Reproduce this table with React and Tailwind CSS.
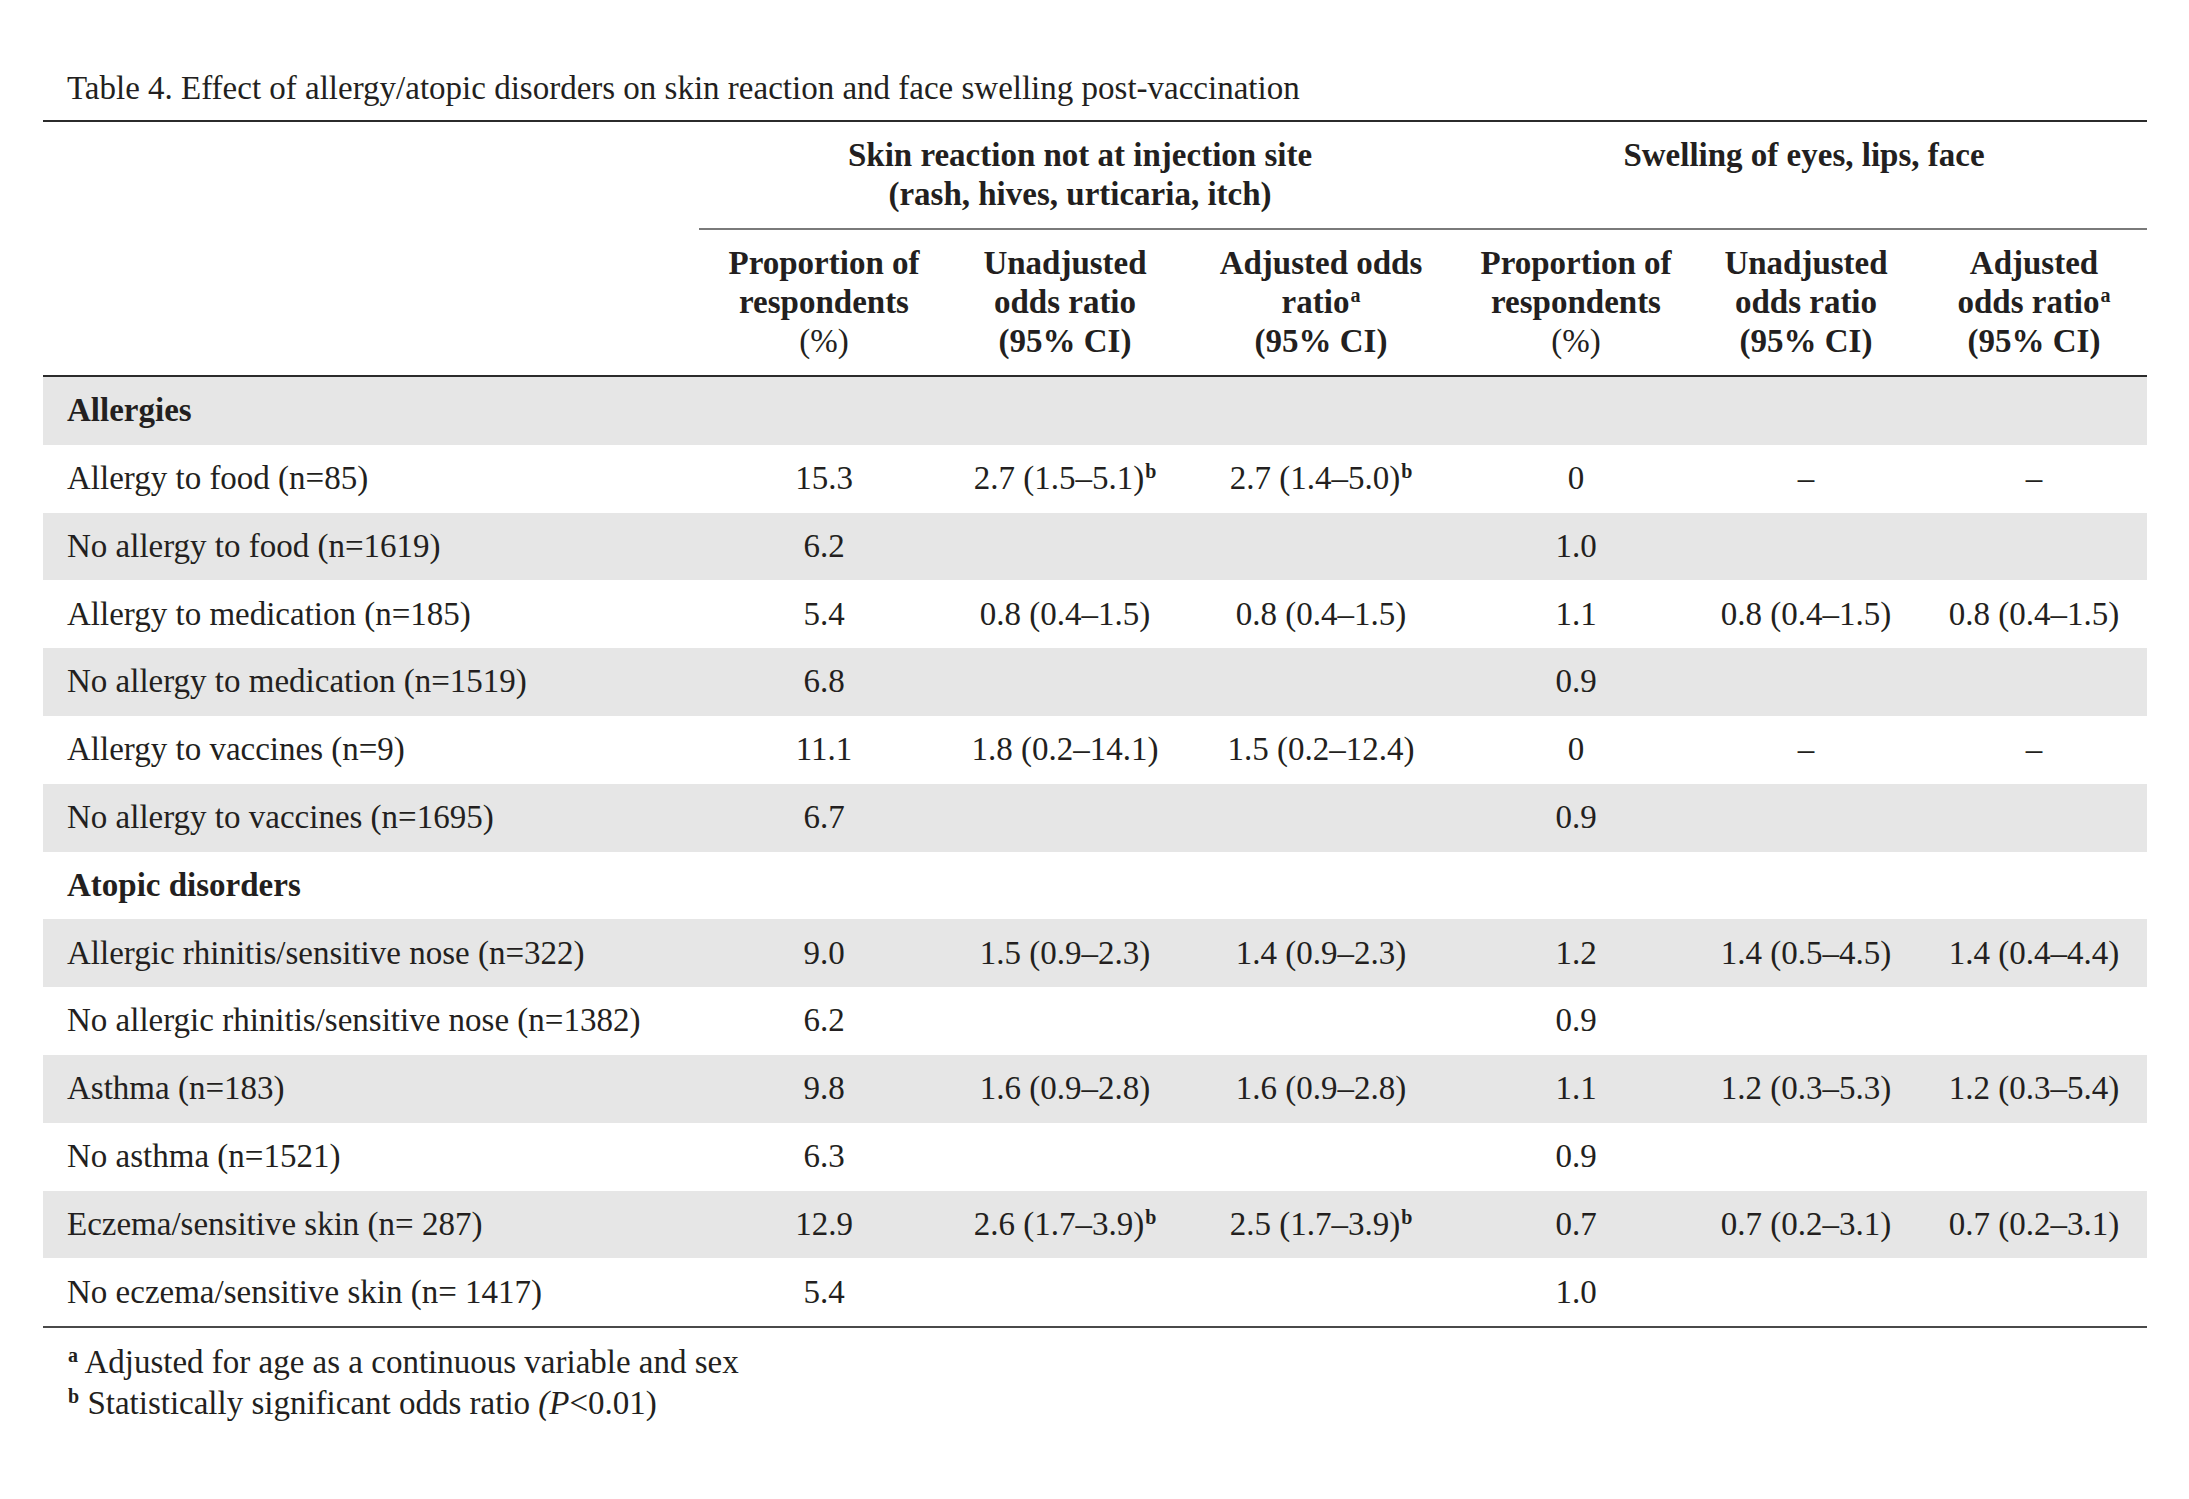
import React from "react";

const cols = "grid grid-cols-[656px_250px_232px_280px_230px_230px_226px]";

const rows = [
  { label: "Allergies", bold: true, gray: true },
  { label: "Allergy to food (n=85)", v: ["15.3", ["2.7 (1.5–5.1)", "b"], ["2.7 (1.4–5.0)", "b"], "0", "–", "–"] },
  { label: "No allergy to food (n=1619)", gray: true, v: ["6.2", "", "", "1.0", "", ""] },
  { label: "Allergy to medication (n=185)", v: ["5.4", "0.8 (0.4–1.5)", "0.8 (0.4–1.5)", "1.1", "0.8 (0.4–1.5)", "0.8 (0.4–1.5)"] },
  { label: "No allergy to medication (n=1519)", gray: true, v: ["6.8", "", "", "0.9", "", ""] },
  { label: "Allergy to vaccines (n=9)", v: ["11.1", "1.8 (0.2–14.1)", "1.5 (0.2–12.4)", "0", "–", "–"] },
  { label: "No allergy to vaccines (n=1695)", gray: true, v: ["6.7", "", "", "0.9", "", ""] },
  { label: "Atopic disorders", bold: true },
  { label: "Allergic rhinitis/sensitive nose (n=322)", gray: true, v: ["9.0", "1.5 (0.9–2.3)", "1.4 (0.9–2.3)", "1.2", "1.4 (0.5–4.5)", "1.4 (0.4–4.4)"] },
  { label: "No allergic rhinitis/sensitive nose (n=1382)", v: ["6.2", "", "", "0.9", "", ""] },
  { label: "Asthma (n=183)", gray: true, v: ["9.8", "1.6 (0.9–2.8)", "1.6 (0.9–2.8)", "1.1", "1.2 (0.3–5.3)", "1.2 (0.3–5.4)"] },
  { label: "No asthma (n=1521)", v: ["6.3", "", "", "0.9", "", ""] },
  { label: "Eczema/sensitive skin (n= 287)", gray: true, v: ["12.9", ["2.6 (1.7–3.9)", "b"], ["2.5 (1.7–3.9)", "b"], "0.7", "0.7 (0.2–3.1)", "0.7 (0.2–3.1)"] },
  { label: "No eczema/sensitive skin (n= 1417)", v: ["5.4", "", "", "1.0", "", ""] },
];

function Sup({ children }) {
  return (
    <span className="relative -top-[11px] text-[20px] font-bold leading-none ml-[1px]">{children}</span>
  );
}

function Cell({ value }) {
  if (Array.isArray(value)) {
    return (
      <div className="text-center">
        {value[0]}
        <Sup>{value[1]}</Sup>
      </div>
    );
  }
  return <div className="text-center">{value}</div>;
}

export default function App() {
  return (
    <div className="min-h-[1499px] w-[2189px] bg-white text-[#231f20] font-['Liberation_Serif','Times_New_Roman',serif] text-[33px]">
      <div className="ml-[43px] w-[2104px] pt-[68px]">
        <div className="pl-[24px] leading-[40px] mb-[12px]">
          Table 4. Effect of allergy/atopic disorders on skin reaction and face swelling post-vaccination
        </div>

        <div className="border-t-2 border-[#2b2b2b]">
          {/* group header */}
          <div className={`${cols} font-bold leading-[39px]`}>
            <div />
            <div className="col-span-3 border-b-2 border-[#7a7a7a] pt-[14px] pb-[14px] text-center">
              <div>Skin reaction not at injection site</div>
              <div>(rash, hives, urticaria, itch)</div>
            </div>
            <div className="col-span-3 border-b-2 border-[#7a7a7a] pt-[14px] pb-[14px] text-center">
              <div>Swelling of eyes, lips, face</div>
            </div>
          </div>

          {/* sub header */}
          <div className={`${cols} font-bold leading-[39px] border-b-2 border-[#2b2b2b] pt-[14px] pb-[14px]`}>
            <div />
            <div className="text-center">
              <div>Proportion of</div>
              <div>respondents</div>
              <div className="font-normal">(%)</div>
            </div>
            <div className="text-center">
              <div>Unadjusted</div>
              <div>odds ratio</div>
              <div>(95% CI)</div>
            </div>
            <div className="text-center">
              <div>Adjusted odds</div>
              <div>
                ratio<Sup>a</Sup>
              </div>
              <div>(95% CI)</div>
            </div>
            <div className="text-center">
              <div>Proportion of</div>
              <div>respondents</div>
              <div className="font-normal">(%)</div>
            </div>
            <div className="text-center">
              <div>Unadjusted</div>
              <div>odds ratio</div>
              <div>(95% CI)</div>
            </div>
            <div className="text-center">
              <div>Adjusted</div>
              <div>
                odds ratio<Sup>a</Sup>
              </div>
              <div>(95% CI)</div>
            </div>
          </div>

          {/* body */}
          <div className="border-b-2 border-[#4a4a4a]">
            {rows.map((r, i) => (
              <div
                key={i}
                className={`${cols} h-[67.8px] items-center ${r.gray ? "bg-[#e6e6e6]" : "bg-white"}`}
              >
                <div className={`pl-[24px] ${r.bold ? "font-bold" : ""}`}>{r.label}</div>
                {r.v ? r.v.map((v, j) => <Cell key={j} value={v} />) : null}
              </div>
            ))}
          </div>

          {/* footnotes */}
          <div className="pl-[24px] pt-[14px] leading-[41px]">
            <div>
              <Sup>a</Sup> Adjusted for age as a continuous variable and sex
            </div>
            <div>
              <Sup>b</Sup> Statistically significant odds ratio <span className="italic">(P</span>&lt;0.01)
            </div>
          </div>
        </div>
      </div>
    </div>
  );
}
